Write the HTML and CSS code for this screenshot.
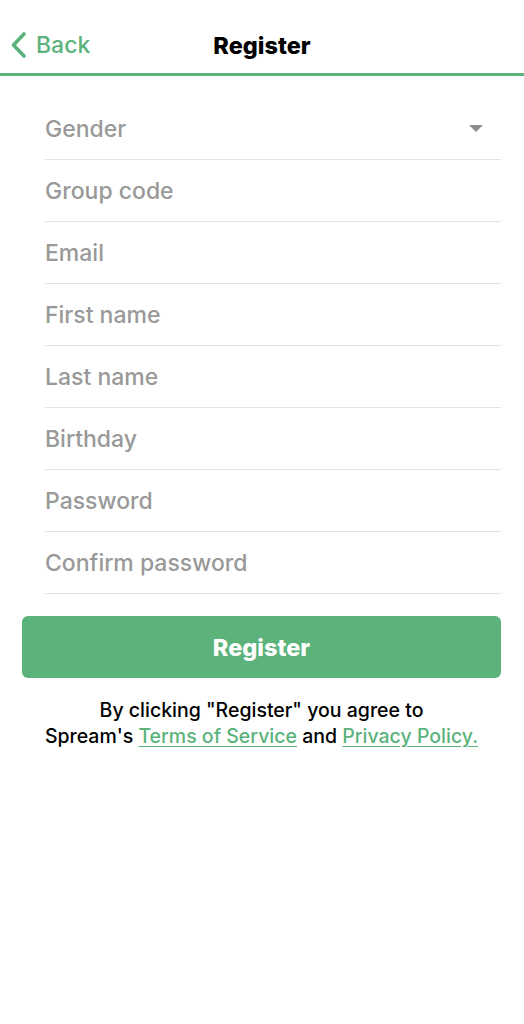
FILE: index.html
```html
<!DOCTYPE html>
<html>
<head>
<meta charset="utf-8">
<link rel="stylesheet" href="styles.css">
</head>
<body>
<header class="nav">
  <a class="back">
    <svg class="chev" width="17" height="28" viewBox="0 0 17 28"><path d="M14 3 L3.5 14 L14 25" fill="none" stroke="#5bb37b" stroke-width="3.6" stroke-linecap="round" stroke-linejoin="round"/></svg>
    <span>Back</span>
  </a>
  <h1 class="title">Register</h1>
</header>
<main class="form">
  <div class="row select"><span>Gender</span><span class="caret"></span></div>
  <div class="row"><span>Group code</span></div>
  <div class="row"><span>Email</span></div>
  <div class="row"><span>First name</span></div>
  <div class="row"><span>Last name</span></div>
  <div class="row"><span>Birthday</span></div>
  <div class="row"><span>Password</span></div>
  <div class="row"><span>Confirm password</span></div>
</main>
<div class="actions">
  <button class="btn">Register</button>
  <p class="terms">By clicking "Register" you agree to<br>Spream's <a>Terms of Service</a> and <a>Privacy Policy.</a></p>
</div>
</body>
</html>
```
FILE: styles.css
```css
* { box-sizing: border-box; }
body {
  margin: 0;
  background: #fff;
  font-family: Inter, "Liberation Sans", sans-serif;
  width: 524px;
}
.nav {
  position: relative;
  height: 76px;
  border-bottom: 3px solid #5bb37b;
  display: flex;
  align-items: center;
  justify-content: center;
  padding-top: 18px;
}
.back {
  position: absolute;
  left: 10px;
  top: 31px;
  display: flex;
  align-items: center;
  gap: 9px;
  color: #5bb37b;
  font-size: 23px;
  font-weight: 500;
}
.chev { display: block; }
.title {
  margin: 0;
  font-size: 23.5px;
  font-weight: 800;
  color: #000;
}
.form {
  margin: 22px 23px 0 45px;
}
.row {
  height: 62px;
  border-bottom: 1px solid #e4e4e4;
  display: flex;
  align-items: center;
  justify-content: space-between;
  color: #999;
  font-size: 23px;
  font-weight: 500;
}
.caret {
  width: 0; height: 0;
  border-left: 7px solid transparent;
  border-right: 7px solid transparent;
  border-top: 7px solid #8e8e8e;
  margin-right: 18px;
}
.actions {
  padding: 22px 23px 0 22px;
}
.btn {
  display: block;
  width: 100%;
  height: 62px;
  background: #5bb37b;
  border: none;
  border-radius: 6px;
  color: #fff;
  font-family: inherit;
  font-size: 23.5px;
  font-weight: 800;
}
.terms {
  margin: 19px 0 0;
  text-align: center;
  font-size: 19.5px;
  line-height: 26px;
  color: #000;
  font-weight: 500;
}
.terms a {
  color: #5bb37b;
  text-decoration: underline;
  text-underline-offset: 3px;
}
```
